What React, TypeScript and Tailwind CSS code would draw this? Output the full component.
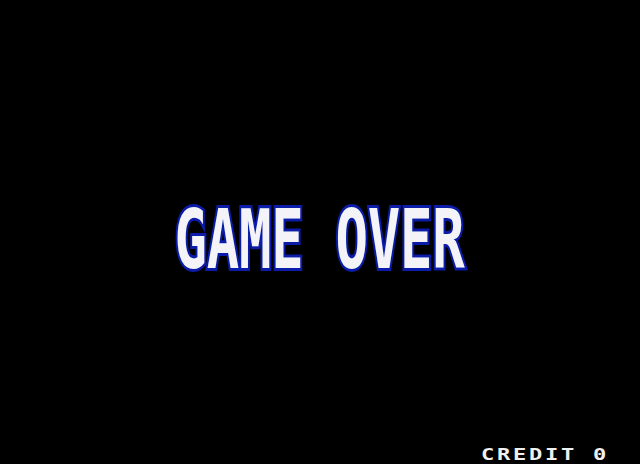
const credit = ["C", "R", "E", "D", "I", "T", " ", "0"];

export default function App() {
  return (
    <div className="relative flex h-[464px] w-[640px] items-center justify-center overflow-hidden bg-black">
      {/* big title, stretched tall like the arcade font */}
      <div className="flex h-[66px] items-center justify-center pt-[18px] pr-[1px]">
        <h1 className="scale-y-[1.51] whitespace-pre font-bold leading-none tracking-[-0.3px] text-[#f4f4f8] [font-family:'DejaVu_Sans_Mono',monospace] text-[54px] [paint-order:stroke_fill] [-webkit-text-stroke:4px_#0a1ca8]">
          GAME OVER
        </h1>
      </div>

      {/* credit counter */}
      <div className="absolute bottom-[1px] left-[481px] flex font-bold leading-none text-[#f0f0f0] [font-family:'DejaVu_Sans_Mono',monospace] text-[16px]">
        {credit.map((ch, i) => (
          <span key={i} className="inline-block w-[16px] origin-left scale-x-[1.38] whitespace-pre">
            {ch}
          </span>
        ))}
      </div>
    </div>
  );
}
